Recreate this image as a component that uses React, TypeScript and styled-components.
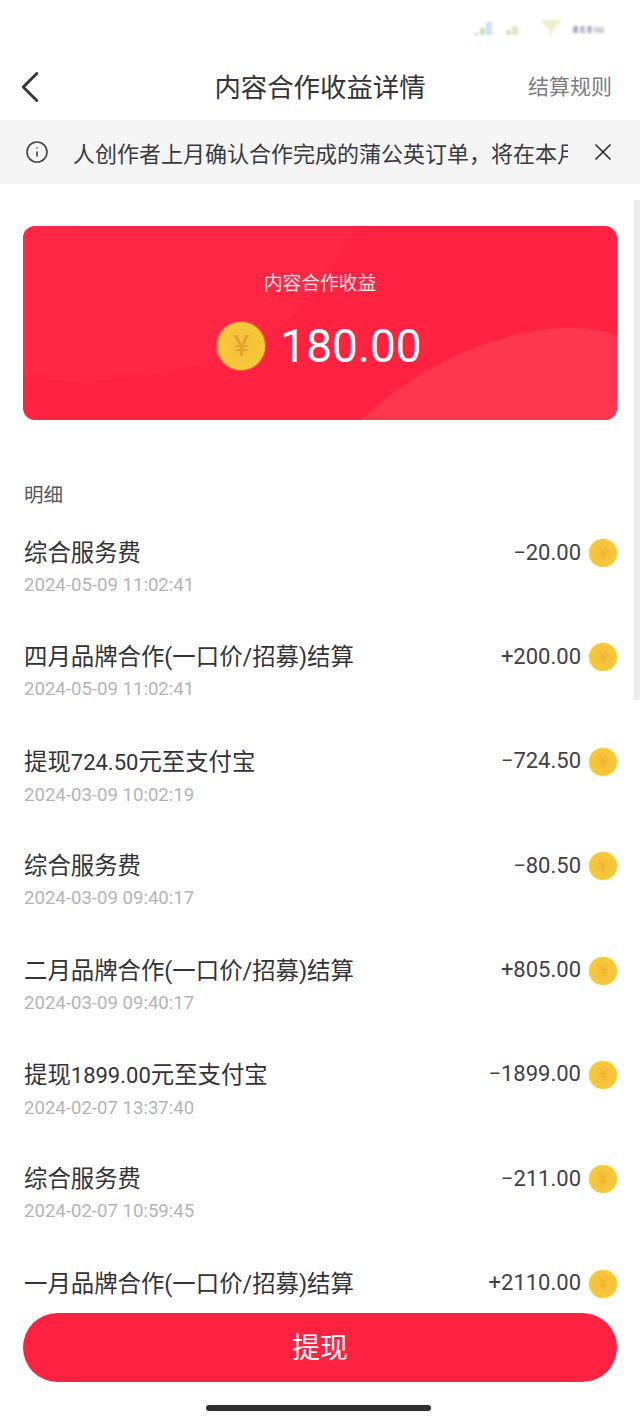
import React from 'react';
import styled, { createGlobalStyle } from 'styled-components';
import { ChevronLeft, Info, X } from 'lucide-react';

const GlobalStyle = createGlobalStyle`
    html, body {
        margin: 0;
        background: #fff;
    }
    body {
        font-family: Roboto, "Noto Sans CJK SC", sans-serif;
        color: #2b2b2f;
    }
`;

type Entry = { title: string; time: string; amount: string };

const entries: Entry[] = [
    { title: '综合服务费', time: '2024-05-09 11:02:41', amount: '−20.00' },
    { title: '四月品牌合作(一口价/招募)结算', time: '2024-05-09 11:02:41', amount: '+200.00' },
    { title: '提现724.50元至支付宝', time: '2024-03-09 10:02:19', amount: '−724.50' },
    { title: '综合服务费', time: '2024-03-09 09:40:17', amount: '−80.50' },
    { title: '二月品牌合作(一口价/招募)结算', time: '2024-03-09 09:40:17', amount: '+805.00' },
    { title: '提现1899.00元至支付宝', time: '2024-02-07 13:37:40', amount: '−1899.00' },
    { title: '综合服务费', time: '2024-02-07 10:59:45', amount: '−211.00' },
    { title: '一月品牌合作(一口价/招募)结算', time: '2024-02-07 10:59:45', amount: '+2110.00' },
];

// digits inside a title run a little smaller than the Chinese around them
const renderTitle = (title: string) =>
    title.split(/([\d.]+)/).map((part, i) => (i % 2 ? <Figure key={i}>{part}</Figure> : part));

export default function App() {
    return (
        <Page>
            <GlobalStyle />
            <StatusBar>
                <svg width="140" height="24" viewBox="0 0 140 24">
                    <defs>
                        <filter id="soft">
                            <feGaussianBlur stdDeviation="1.1" />
                        </filter>
                    </defs>
                    <g filter="url(#soft)">
                        <path d="M2 18 L8 16 L8 18 Z" fill="#e0b0c8" />
                        <rect x="10" y="11" width="5" height="7" fill="#c6e2b6" />
                        <rect x="16" y="5" width="6" height="13" fill="#cfe0f0" />
                        <rect x="36" y="13" width="5" height="5" fill="#e8dfb4" />
                        <rect x="42" y="9" width="6" height="9" fill="#dbe8c4" />
                        <path d="M70 3 L92 3 L83 13 L81 21 L79 13 Z" fill="#ecefcc" />
                        <rect x="103" y="9" width="5" height="7" fill="#b0aec6" />
                        <rect x="110" y="9" width="5" height="7" fill="#c0bed0" />
                        <rect x="117" y="9" width="5" height="7" fill="#b8b6ca" />
                        <rect x="124" y="10" width="10" height="6" fill="#d0cfdc" />
                    </g>
                </svg>
            </StatusBar>

            <NavBar>
                <BackIcon size={54} strokeWidth={1.3} />
                <NavTitle>内容合作收益详情</NavTitle>
                <NavLink>结算规则</NavLink>
            </NavBar>

            <Notice>
                <Info size={24} strokeWidth={1.6} color="#444" />
                <NoticeText>人创作者上月确认合作完成的蒲公英订单，将在本月结算</NoticeText>
                <X size={28} strokeWidth={1.5} color="#333" />
            </Notice>

            <Content>
                <BalanceCard>
                    <CardWaves viewBox="0 0 594 194" preserveAspectRatio="none">
                        <path d="M0 0 L332 0 C310 50 270 110 190 135 C120 155 50 160 0 150 Z" fill="#ff3450" opacity="0.28" />
                        <path d="M338 194 C385 150 450 112 530 102 C560 100 580 104 594 110 L594 194 Z" fill="#ff3650" />
                    </CardWaves>
                    <CardLabel>内容合作收益</CardLabel>
                    <CardAmount>
                        <Coin $size={48} $mark="#e0a32c">¥</Coin>
                        <BalanceValue>180.00</BalanceValue>
                    </CardAmount>
                </BalanceCard>

                <SectionLabel>明细</SectionLabel>

                <List>
                    {entries.map((entry, i) => (
                        <Row key={i}>
                            <RowMain>
                                <RowTitle>{renderTitle(entry.title)}</RowTitle>
                                <RowTime>{entry.time}</RowTime>
                            </RowMain>
                            <RowAmount>
                                <AmountText>{entry.amount}</AmountText>
                                <Coin $size={28} $mark="#efb62f">¥</Coin>
                            </RowAmount>
                        </Row>
                    ))}
                </List>

                <ScrollThumb />
            </Content>

            <Footer>
                <WithdrawButton>提现</WithdrawButton>
                <HomeIndicator />
            </Footer>
        </Page>
    );
}

const Page = styled.div`
    display: flex;
    flex-direction: column;
    width: 640px;
    height: 1422px;
    overflow: hidden;
    background: #fff;
`;

const StatusBar = styled.div`
    display: flex;
    justify-content: flex-end;
    align-items: center;
    height: 57px;
    padding-right: 30px;
    box-sizing: border-box;
    flex-shrink: 0;
`;

const NavBar = styled.header`
    display: flex;
    align-items: center;
    justify-content: center;
    position: relative;
    height: 63px;
    padding-bottom: 6px;
    box-sizing: border-box;
    flex-shrink: 0;
`;

const BackIcon = styled(ChevronLeft)`
    position: absolute;
    left: 3px;
    top: 3px;
    color: #38383c;
`;

const NavTitle = styled.h1`
    margin: 0;
    font-size: 26.4px;
    font-weight: 400;
    color: #333337;
`;

const NavLink = styled.span`
    position: absolute;
    right: 28px;
    top: 13px;
    font-size: 21px;
    color: #7c7c81;
`;

const Notice = styled.div`
    display: flex;
    align-items: center;
    height: 64px;
    padding: 0 11px 0 25px;
    box-sizing: border-box;
    background: #f5f5f5;
    flex-shrink: 0;
`;

const NoticeText = styled.div`
    width: 495px;
    margin: 0 21px 0 24px;
    overflow: hidden;
    white-space: nowrap;
    font-size: 22px;
    color: #3a3a3e;
`;

const Content = styled.main`
    position: relative;
    flex: 1;
    min-height: 0;
    overflow: hidden;
    padding: 42px 23px 0 24px;
`;

const BalanceCard = styled.section`
    position: relative;
    display: flex;
    flex-direction: column;
    align-items: center;
    height: 194px;
    margin-left: -1px;
    overflow: hidden;
    border-radius: 12px;
    background: #ff2341;
`;

const CardWaves = styled.svg`
    position: absolute;
    inset: 0;
    width: 100%;
    height: 100%;
`;

const CardLabel = styled.div`
    position: relative;
    margin-top: 44px;
    font-size: 18.8px;
    line-height: 28px;
    color: #ffe3e6;
`;

const CardAmount = styled.div`
    position: relative;
    display: flex;
    align-items: center;
    gap: 15px;
    margin-top: 24px;
    margin-left: -1px;
`;

const BalanceValue = styled.span`
    font-size: 46px;
    line-height: 46px;
    color: #fff;
`;

const Coin = styled.span<{ $size: number; $mark: string }>`
    display: inline-flex;
    align-items: center;
    justify-content: center;
    flex-shrink: 0;
    width: ${p => p.$size}px;
    height: ${p => p.$size}px;
    border-radius: 50%;
    background: radial-gradient(circle at 50% 50%, #f6bd3a 0%, #f7c63a 55%, #f0cf36 100%);
    box-shadow: 0 0 2px #f7d94c;
    color: ${p => p.$mark};
    font-size: ${p => Math.round(p.$size * 0.62)}px;
    line-height: 1;
`;

const SectionLabel = styled.div`
    margin-top: 62px;
    font-size: 19.5px;
    line-height: 28px;
    color: #55555a;
`;

const List = styled.div`
    display: flex;
    flex-direction: column;
    margin-top: 27px;
`;

const Row = styled.div`
    display: flex;
    justify-content: space-between;
    align-items: flex-start;
    height: 104.4px;
    flex-shrink: 0;
`;

const RowMain = styled.div`
    display: flex;
    flex-direction: column;
`;

const RowTitle = styled.div`
    font-size: 23.4px;
    line-height: 32px;
    color: #333337;
`;

const Figure = styled.span`
    font-size: 22px;
`;

const RowTime = styled.div`
    margin-top: 6px;
    font-size: 18.6px;
    line-height: 20px;
    color: #b4b4b8;
`;

const RowAmount = styled.div`
    display: flex;
    align-items: center;
    gap: 8px;
    height: 32px;
`;

const AmountText = styled.span`
    padding-bottom: 2px;
    font-size: 22px;
    color: #414145;
`;

const ScrollThumb = styled.div`
    position: absolute;
    top: 16px;
    right: 0;
    width: 6px;
    height: 500px;
    background: #ececec;
`;

const Footer = styled.footer`
    display: flex;
    flex-direction: column;
    align-items: center;
    height: 122px;
    padding-top: 13px;
    box-sizing: border-box;
    background: #fff;
    flex-shrink: 0;
`;

const WithdrawButton = styled.button`
    width: 594px;
    height: 69px;
    padding: 0 0 4px;
    border: none;
    border-radius: 35px;
    background: #ff2241;
    color: #fff;
    font-family: inherit;
    font-size: 28px;
`;

const HomeIndicator = styled.div`
    width: 225px;
    height: 6px;
    margin-top: 23px;
    margin-right: 3px;
    border-radius: 3px;
    background: #2f2f33;
`;
